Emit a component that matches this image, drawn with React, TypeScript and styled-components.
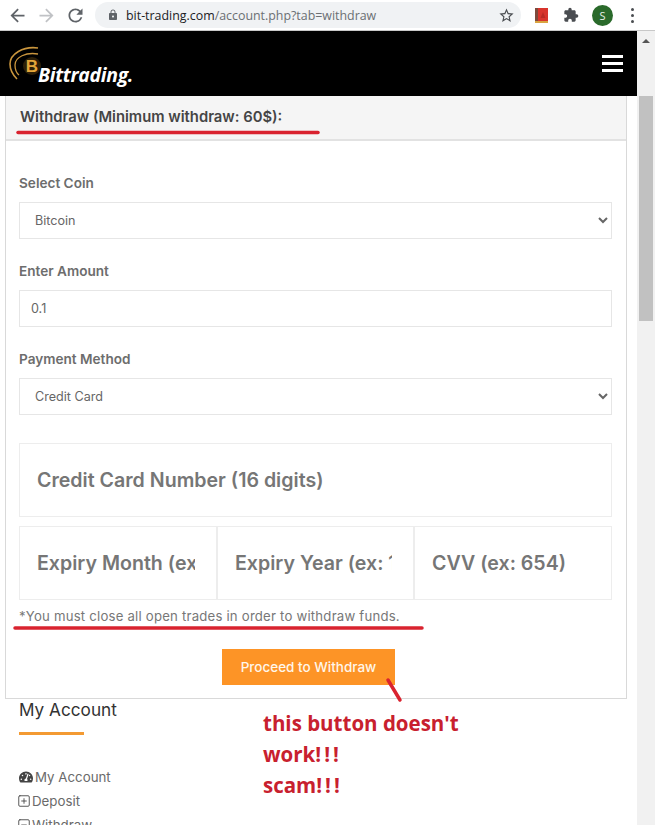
import React from 'react'
import styled, { createGlobalStyle } from 'styled-components'
import {
    MdArrowBack,
    MdArrowForward,
    MdRefresh,
    MdLock,
    MdStarBorder,
    MdExtension,
} from 'react-icons/md'
import { FaTachometerAlt } from 'react-icons/fa'
import { SquarePlus, SquareMinus } from 'lucide-react'

const FONT = `Inter, "Open Sans", "Liberation Sans", sans-serif`

const GlobalStyle = createGlobalStyle`
    html, body {
        margin: 0;
        padding: 0;
        height: 825px;
        overflow: hidden;
        background: #fff;
        font-family: ${FONT};
    }
    * { box-sizing: border-box; }
`

const Frame = styled.div`
    position: relative;
    width: 655px;
    height: 825px;
    overflow: hidden;
`

/* browser toolbar */
const Toolbar = styled.div`
    height: 31px;
    display: flex;
    align-items: center;
    background: #fff;
    border-bottom: 1px solid #c8c8c8;
    padding-left: 7px;
`

const NavButton = styled.span<{ $color: string; $gap: number }>`
    display: flex;
    color: ${(p) => p.$color};
    margin-right: ${(p) => p.$gap}px;
    font-size: 21px;
`

const AddressBar = styled.div`
    width: 426px;
    height: 26px;
    margin-left: 6px;
    padding: 0 6px 0 12px;
    display: flex;
    align-items: center;
    border-radius: 13px;
    background: #f0f2f4;
    color: #5f6368;
    font-size: 12.4px;
    font-family: "Open Sans", sans-serif;
`

const UrlHost = styled.span`
    color: #202124;
    margin-left: 7px;
`

const UrlPath = styled.span`
    flex: 1;
    color: #6b6f73;
`

const ToolbarIcons = styled.div`
    display: flex;
    align-items: center;
    margin-left: 14px;
    gap: 14px;
    color: #4a4d51;
`

const Avatar = styled.span`
    width: 21px;
    height: 21px;
    margin-left: -1px;
    border-radius: 50%;
    background: #2a6a2b;
    color: #e8f0e8;
    font-size: 11px;
    display: flex;
    align-items: center;
    justify-content: center;
    font-family: "Open Sans", sans-serif;
`

const Kebab = styled.span`
    display: flex;
    flex-direction: column;
    gap: 3px;
    margin-left: 4px;

    i {
        width: 3px;
        height: 3px;
        border-radius: 50%;
        background: #4a4d51;
    }
`

/* page + scrollbar */
const Viewport = styled.div`
    display: flex;
    height: 794px;
`

const Page = styled.div`
    width: 637px;
    flex: none;
    overflow: hidden;
`

const Scrollbar = styled.div`
    flex: 1;
    background: #f1f1f1;
    padding-top: 65px;
    display: flex;
    justify-content: center;
    position: relative;
`

const ScrollArrow = styled.span`
    position: absolute;
    top: 8px;
    left: 5px;
    width: 0;
    height: 0;
    border-left: 4px solid transparent;
    border-right: 4px solid transparent;
    border-bottom: 4px solid #555;
`

const ScrollThumb = styled.div`
    width: 14px;
    height: 225px;
    background: #c1c1c1;
`

const Header = styled.header`
    height: 65px;
    background: #000;
    display: flex;
    align-items: center;
    justify-content: space-between;
    padding: 0 14px 0 9px;
`

const Logo = styled.div`
    display: flex;
    align-items: flex-end;
    height: 46px;
    margin-top: 6px;
`

const LogoText = styled.span`
    color: #fff;
    font-family: "Open Sans", sans-serif;
    font-style: italic;
    font-weight: 700;
    font-size: 19.4px;
    line-height: 24px;
    letter-spacing: -0.3px;
    margin-left: -5px;
    margin-bottom: 3px;
`

const Burger = styled.div`
    width: 21px;
    display: flex;
    flex-direction: column;
    gap: 4px;

    i {
        height: 3px;
        background: #fff;
    }
`

const Card = styled.section`
    margin-left: 5px;
    width: 622px;
    height: 603px;
    border: 1px solid #d9d9d9;
    border-top: 0;
`

const CardHead = styled.div`
    height: 45px;
    background: #f5f5f5;
    border-bottom: 2px solid #e2e2e2;
    padding: 11px 14px 0;
    font-size: 14.8px;
    line-height: 20px;
    font-weight: 600;
    color: #454545;
`

const CardBody = styled.div`
    padding: 0 13px;
`

const Label = styled.label<{ $first?: boolean }>`
    display: block;
    height: ${(p) => (p.$first ? 61 : 51)}px;
    padding-top: ${(p) => (p.$first ? 32 : 22)}px;
    font-size: 13.6px;
    line-height: 20px;
    font-weight: 600;
    color: #6d6d6d;
`

const controlBase = `
    display: block;
    width: 593px;
    height: 37px;
    border: 1px solid #e6e6e6;
    background: #fff;
    font-family: ${FONT};
    font-size: 12.6px;
    color: #666;
    outline: none;
`

const Select = styled.select`
    ${controlBase}
    padding-left: 11px;
`

const Input = styled.input`
    ${controlBase}
    padding-left: 11px;
`

const CardGrid = styled.div`
    margin-top: 28px;
    width: 593px;
    display: grid;
    grid-template-columns: 198px 197px 198px;
    grid-template-rows: 74px 74px;
    row-gap: 9px;
`

const BigInput = styled.input<{ $wide?: boolean }>`
    grid-column: ${(p) => (p.$wide ? '1 / -1' : 'auto')};
    width: 100%;
    height: 100%;
    min-width: 0;
    border: 1px solid #ededed;
    background: #fff;
    padding: 0 21px 0 17px;
    font-family: ${FONT};
    font-size: 19.6px;
    font-weight: 600;
    outline: none;

    &::placeholder {
        color: #767676;
        opacity: 1;
    }
`

const Note = styled.p`
    margin: 6px 0 0;
    font-size: 13.2px;
    line-height: 20px;
    letter-spacing: 0.2px;
    color: #777;
`

const ButtonRow = styled.div`
    display: flex;
    margin: 23px 0 0 203px;
`

const SubmitButton = styled.button`
    width: 173px;
    height: 36px;
    border: 0;
    background: #fd9426;
    color: #fff6ea;
    font-family: ${FONT};
    font-size: 13.5px;
    font-weight: 500;
`

const Sidebar = styled.aside`
    padding-left: 19px;
`

const SideTitle = styled.h3`
    margin: 0;
    padding-top: 1px;
    font-size: 17.2px;
    line-height: 20px;
    font-weight: 400;
    color: #333;
`

const SideRule = styled.div`
    width: 65px;
    height: 3px;
    margin-top: 12px;
    background: #f39a32;
`

const SideList = styled.ul`
    list-style: none;
    margin: 30px 0 0;
    padding: 0;
`

const SideItem = styled.li<{ $boxed?: boolean }>`
    display: flex;
    align-items: center;
    gap: ${(p) => (p.$boxed ? 1 : 2)}px;
    margin-left: ${(p) => (p.$boxed ? -2 : 0)}px;
    height: 24px;
    font-size: 13.3px;
    color: #6a6a6a;

    svg {
        color: #444;
    }
`

/* red marker scribbles over the screenshot */
const Scribble = styled.svg`
    position: absolute;
    inset: 0;
    pointer-events: none;
`

const Complaint = styled.div`
    position: absolute;
    left: 263px;
    top: 708px;
    font-family: "Open Sans", sans-serif;
    font-size: 20.5px;
    line-height: 31px;
    font-weight: 700;
    color: #c8202e;
`

const Bangs = styled.span`
    letter-spacing: 3px;
`

export default function App() {
    return (
        <Frame>
            <GlobalStyle />
            <Toolbar>
                <NavButton $color="#5f6368" $gap={8}>
                    <MdArrowBack />
                </NavButton>
                <NavButton $color="#c0c2c5" $gap={8}>
                    <MdArrowForward />
                </NavButton>
                <NavButton $color="#5f6368" $gap={3}>
                    <MdRefresh />
                </NavButton>
                <AddressBar>
                    <MdLock size={12} />
                    <UrlHost>bit-trading.com</UrlHost>
                    <UrlPath>/account.php?tab=withdraw</UrlPath>
                    <MdStarBorder size={17} color="#4a4d51" />
                </AddressBar>
                <ToolbarIcons>
                    <svg width="14" height="15" viewBox="0 0 14 15">
                        <rect width="13" height="14" fill="#d8342c" />
                        <rect width="3" height="14" fill="#7d4a3c" />
                        <rect y="13" width="13" height="2" fill="#d9a441" />
                        <path d="M8 4l2.500 6h-5z" fill="#b92a24" />
                    </svg>
                    <MdExtension size={16} />
                    <Avatar>S</Avatar>
                    <Kebab>
                        <i />
                        <i />
                        <i />
                    </Kebab>
                </ToolbarIcons>
            </Toolbar>
            <Viewport>
                <Page>
                    <Header>
                        <Logo>
                            <svg width="34" height="44" viewBox="0 0 34 44">
                                <g fill="none" stroke="#c9953d">
                                    <path d="M29 2C14 0 1 8 1 18c0 6 3 11 7 15" strokeWidth="1.600" />
                                    <path d="M29 8C17 6 6 11 6 19c0 4 1.500 8 4 10" strokeWidth="1.300" />
                                </g>
                                <circle cx="23" cy="20" r="9" fill="#2c1f08" />
                                <text
                                    x="23"
                                    y="26"
                                    textAnchor="middle"
                                    fontFamily="Liberation Sans, sans-serif"
                                    fontWeight="700"
                                    fontSize="17"
                                    fill="#e3a63a"
                                >
                                    B
                                </text>
                            </svg>
                            <LogoText>Bittrading.</LogoText>
                        </Logo>
                        <Burger>
                            <i />
                            <i />
                            <i />
                        </Burger>
                    </Header>
                    <Card>
                        <CardHead>Withdraw (Minimum withdraw: 60$):</CardHead>
                        <CardBody>
                            <Label $first>Select Coin</Label>
                            <Select defaultValue="Bitcoin">
                                <option>Bitcoin</option>
                            </Select>
                            <Label>Enter Amount</Label>
                            <Input defaultValue="0.1" />
                            <Label>Payment Method</Label>
                            <Select defaultValue="Credit Card">
                                <option>Credit Card</option>
                            </Select>
                            <CardGrid>
                                <BigInput $wide placeholder="Credit Card Number (16 digits)" />
                                <BigInput placeholder="Expiry Month (ex: 12)" />
                                <BigInput placeholder="Expiry Year (ex: 19)" />
                                <BigInput placeholder="CVV (ex: 654)" />
                            </CardGrid>
                            <Note>*You must close all open trades in order to withdraw funds.</Note>
                            <ButtonRow>
                                <SubmitButton>Proceed to Withdraw</SubmitButton>
                            </ButtonRow>
                        </CardBody>
                    </Card>
                    <Sidebar>
                        <SideTitle>My Account</SideTitle>
                        <SideRule />
                        <SideList>
                            <SideItem>
                                <FaTachometerAlt size={14} />
                                My Account
                            </SideItem>
                            <SideItem $boxed>
                                <SquarePlus size={14} strokeWidth={1.5} />
                                Deposit
                            </SideItem>
                            <SideItem $boxed>
                                <SquareMinus size={14} strokeWidth={1.5} />
                                Withdraw
                            </SideItem>
                        </SideList>
                    </Sidebar>
                </Page>
                <Scrollbar>
                    <ScrollArrow />
                    <ScrollThumb />
                </Scrollbar>
            </Viewport>
            <Scribble width="655" height="825" viewBox="0 0 655 825">
                <g stroke="#d9232f" strokeLinecap="round" fill="none">
                    <path d="M18 132.500H318" strokeWidth="3.500" />
                    <path d="M15 628H422" strokeWidth="3.500" />
                    <path d="M388 680L400 700" strokeWidth="3.500" />
                </g>
            </Scribble>
            <Complaint>
                this button doesn't
                <br />
                work<Bangs>!!!</Bangs>
                <br />
                scam<Bangs>!!!</Bangs>
            </Complaint>
        </Frame>
    )
}
